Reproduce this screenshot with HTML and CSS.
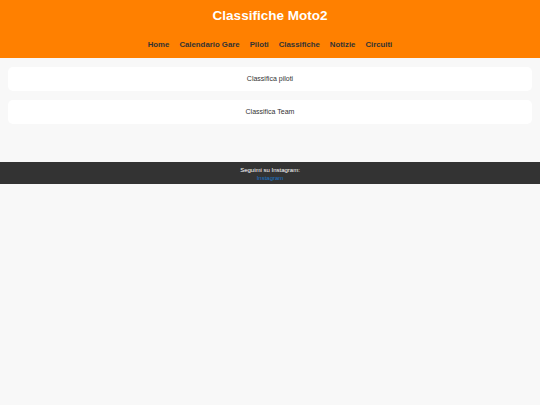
FILE: index.html
```html
<!DOCTYPE html>
<html lang="it">
<head>
  <meta charset="UTF-8">
  <meta name="viewport" content="width=device-width, initial-scale=1.0">
  <title>Classifiche Moto2</title>
  <link rel="stylesheet" href="styles.css">
</head>
<body>
  <header class="site-header">
    <h1 class="site-title">Classifiche Moto2</h1>
    <nav class="main-nav">
      <a href="#">Home</a>
      <a href="#">Calendario Gare</a>
      <a href="#">Piloti</a>
      <a href="#">Classifiche</a>
      <a href="#">Notizie</a>
      <a href="#">Circuiti</a>
    </nav>
  </header>

  <main class="content">
    <section class="card">Classifica piloti</section>
    <section class="card">Classifica Team</section>
  </main>

  <footer class="site-footer">
    <p>Seguimi su Instagram:</p>
    <a href="#">Instagram</a>
  </footer>
</body>
</html>
```

FILE: styles.css
```css
* {
  margin: 0;
  padding: 0;
  box-sizing: border-box;
}

body {
  font-family: "Liberation Sans", Arial, sans-serif;
  background: #f8f8f8;
  color: #333;
}

.site-header {
  background: #ff8000;
  text-align: center;
  padding: 8px 0 8px;
  height: 58px;
}

.site-title {
  color: white;
  font-size: 13.5px;
  font-weight: bold;
  line-height: 16px;
}

.main-nav {
  margin-top: 16px;
  display: flex;
  justify-content: center;
  gap: 10px;
}

.main-nav a {
  color: #333;
  text-decoration: none;
  font-size: 7.8px;
  font-weight: bold;
  line-height: 10px;
}

.content {
  padding: 9px 8px 38px;
  display: flex;
  flex-direction: column;
  gap: 9px;
}

.card {
  background: white;
  border-radius: 5px;
  height: 24px;
  display: flex;
  align-items: center;
  justify-content: center;
  font-size: 7px;
  color: #333;
  padding-bottom: 2px;
}

.site-footer {
  background: #333;
  color: white;
  text-align: center;
  font-size: 6px;
  line-height: 8px;
  padding: 4px 0 6px;
  height: 22px;
}

.site-footer a {
  color: #1a73c8;
  text-decoration: none;
}
```
